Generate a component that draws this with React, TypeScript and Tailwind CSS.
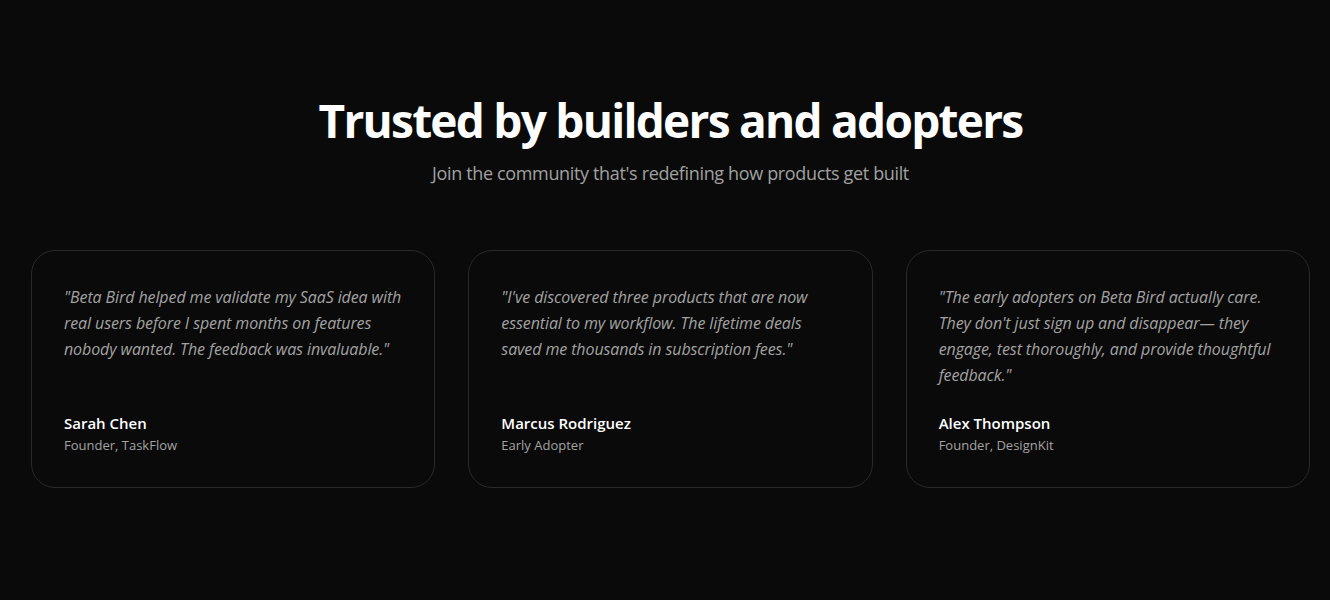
const testimonials = [
  {
    quote:
      "\"Beta Bird helped me validate my SaaS idea with real users before I spent months on features nobody wanted. The feedback was invaluable.\"",
    name: "Sarah Chen",
    role: "Founder, TaskFlow",
  },
  {
    quote:
      "\"I've discovered three products that are now essential to my workflow. The lifetime deals saved me thousands in subscription fees.\"",
    name: "Marcus Rodriguez",
    role: "Early Adopter",
  },
  {
    quote:
      "\"The early adopters on Beta Bird actually care. They don't just sign up and disappear\u2014 they engage, test thoroughly, and provide thoughtful feedback.\"",
    name: "Alex Thompson",
    role: "Founder, DesignKit",
  },
];

export default function App() {
  return (
    <div
      className="min-h-[600px] bg-[#0a0a0a] text-white"
      style={{ fontFamily: '"Open Sans", "Noto Sans", sans-serif' }}>
      <section className="pt-24 pb-24 pl-[31px] pr-[20px]">
        <div className="text-center">
          <h2 className="text-[46px] font-bold leading-[48px] tracking-[-1.75px]">
            Trusted by builders and adopters
          </h2>
          <p className="mt-[15px] text-lg tracking-[-0.35px] text-[#a1a1a1]">
            Join the community that's redefining how products get built
          </p>
        </div>
        <div className="mt-[63px] grid grid-cols-3 gap-[33px]">
          {testimonials.map((t) => (
            <div
              key={t.name}
              className="flex flex-col justify-between rounded-3xl border border-[#292929] bg-[#0a0a0a] px-8 pt-[33px] pb-8">
              <p className="text-base italic leading-[26px] tracking-[-0.1px] text-[#a3a3a3]">
                {t.quote}
              </p>
              <div className="mt-[23px]">
                <p className="text-[15px] font-semibold leading-6 text-white">
                  {t.name}
                </p>
                <p className="text-[13px] leading-5 text-[#a3a3a3]">{t.role}</p>
              </div>
            </div>
          ))}
        </div>
      </section>
    </div>
  );
}
